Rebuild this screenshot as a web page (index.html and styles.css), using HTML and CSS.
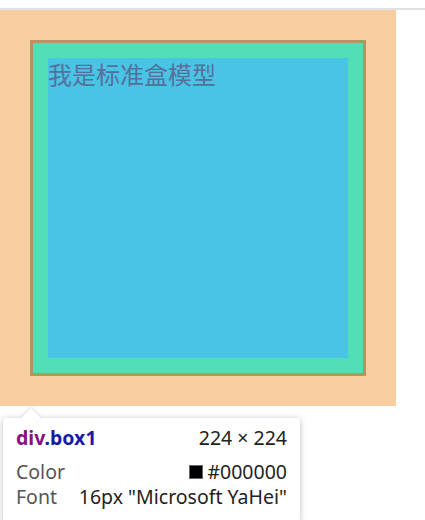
FILE: index.html
```html
<!DOCTYPE html>
<html>
<head>
<meta charset="utf-8">
<link rel="stylesheet" href="styles.css">
</head>
<body>
<div class="topbar"></div>
<div class="margin-area">
  <div class="box1">
    <div class="content">我是标准盒模型</div>
  </div>
</div>
<div class="tooltip">
  <div class="arrow"></div>
  <div class="row row-head">
    <span class="sel"><span class="tag">div</span><span class="cls">.box1</span></span>
    <span class="dim">224 × 224</span>
  </div>
  <div class="row">
    <span class="label">Color</span>
    <span class="val"><span class="swatch"></span>#000000</span>
  </div>
  <div class="row">
    <span class="label">Font</span>
    <span class="val">16px "Microsoft YaHei"</span>
  </div>
</div>
</body>
</html>
```
FILE: styles.css
```css
html, body {
  margin: 0;
  padding: 0;
  background: #ffffff;
}
body {
  position: relative;
  width: 425px;
  height: 520px;
  overflow: hidden;
  font-family: "Noto Sans", "Open Sans", sans-serif;
}
.topbar {
  height: 8px;
  border-bottom: 2px solid #e2e2e2;
}
.margin-area {
  width: 336px;
  height: 336px;
  padding: 30px;
  background: #f8cda0;
}
.box1 {
  width: 300px;
  height: 300px;
  padding: 15px;
  border: 3px solid #b0965f;
  background: #52deb7;
}
.content {
  width: 300px;
  height: 300px;
  background: #49c4e5;
  color: #56709c;
  font-size: 24px;
  line-height: 32px;
  font-family: "Noto Sans CJK SC", sans-serif;
}
.tooltip {
  position: absolute;
  left: 3px;
  top: 418px;
  width: 271px;
  padding: 7px 13px 14px 13px;
  background: #ffffff;
  border-radius: 4px;
  box-shadow: 0 1px 6px rgba(0, 0, 0, 0.25);
  font-size: 19.5px;
  color: #222222;
}
.arrow {
  position: absolute;
  left: 21px;
  top: -7px;
  width: 14px;
  height: 14px;
  background: #ffffff;
  transform: rotate(45deg);
  box-shadow: -1px -1px 3px rgba(0, 0, 0, 0.12);
}
.row {
  position: relative;
  display: flex;
  justify-content: space-between;
  align-items: center;
  height: 25px;
  white-space: nowrap;
}
.row-head {
  margin-bottom: 9px;
}
.sel {
  font-weight: bold;
}
.tag {
  color: #881280;
}
.cls {
  color: #1a1aa6;
}
.label {
  color: #555555;
}
.val {
  display: flex;
  align-items: center;
  color: #222222;
}
.swatch {
  display: inline-block;
  width: 12px;
  height: 12px;
  background: #000000;
  border: 1px solid #666666;
  margin-right: 4px;
}
```
